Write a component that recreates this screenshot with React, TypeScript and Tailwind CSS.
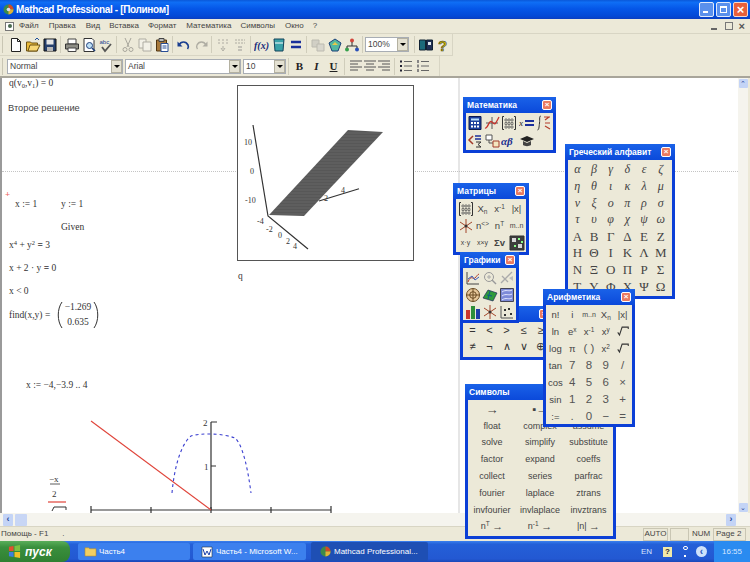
import React from "react";

const Ico = ({ children, size = 16 }: { children: React.ReactNode; size?: number }) => (
  <svg width={size} height={size} viewBox="0 0 16 16" className="block shrink-0">{children}</svg>
);

const Slot = ({ children, dim }: { children: React.ReactNode; dim?: boolean }) => (
  <div className={`w-[17px] h-[18px] flex items-center justify-center shrink-0 ${dim ? "opacity-40" : ""}`}>{children}</div>
);
const Sep = () => (
  <div className="w-[5px] h-[17px] flex justify-center shrink-0"><div className="w-px h-full bg-[#d0cdbb]" /></div>
);
const Handle = () => <div className="w-[3px] h-[17px] mr-[2px] border-l border-[#c9c6b4] shrink-0" />;

const Combo = ({ text, cls }: { text: string; cls: string }) => (
  <div className={`h-[15px] bg-white border border-[#a8adb4] flex items-center justify-between shrink-0 ${cls}`}>
    <span className="pl-[2px] text-[8.5px] leading-none text-[#444]">{text}</span>
    <span className="w-[11px] h-[13px] bg-[#e4e1d2] border border-[#b4b1a1] flex items-center justify-center">
      <span className="w-0 h-0 border-l-[3px] border-r-[3px] border-t-[3px] border-l-transparent border-r-transparent border-t-black" />
    </span>
  </div>
);

const I = {
  newDoc: <Ico><path d="M3.5 1.5h6l3 3v10h-9z" fill="#fff" stroke="#222" /><path d="M9.5 1.5v3h3" fill="none" stroke="#222" /></Ico>,
  open: <Ico><path d="M1.5 5h4l1 1h6v8h-11z" fill="#e8b93a" stroke="#6d5312" /><path d="M3 14l2-6h10l-3 6z" fill="#f7d774" stroke="#6d5312" /><path d="M10 3l2-2 2 2" fill="none" stroke="#1b4d9b" /></Ico>,
  save: <Ico><path d="M2 2h12v12H2z" fill="#25406e" stroke="#111" /><path d="M4.5 2.5h7v5h-7z" fill="#e6e6e6" /><path d="M5 10h6v4H5z" fill="#b8b8b8" /></Ico>,
  print: <Ico><path d="M4 2h8v5H4z" fill="#fff" stroke="#444" /><path d="M1.5 7h13v5h-13z" fill="#8d8d85" stroke="#333" /><path d="M4 11h8v3.5H4z" fill="#fff" stroke="#444" /></Ico>,
  preview: <Ico><path d="M3 1.5h8l2 2v11H3z" fill="#fff" stroke="#333" /><circle cx="8.5" cy="8.5" r="3" fill="#bfe0f5" stroke="#1f3f7a" /><path d="M11 11l3 3" stroke="#1f3f7a" strokeWidth="1.6" /></Ico>,
  spell: <Ico><text x="1.5" y="6.5" fontSize="6" fontFamily="Liberation Sans" fill="#1b3f8f">abc</text><path d="M4 10l3 4 6-7" fill="none" stroke="#555" strokeWidth="1.8" /></Ico>,
  cut: <Ico><path d="M5 1l4 9M11 1L7 10" stroke="#444" /><circle cx="5" cy="12.5" r="2" fill="none" stroke="#444" /><circle cx="11" cy="12.5" r="2" fill="none" stroke="#444" /></Ico>,
  copy: <Ico><path d="M2 2h7v9H2z" fill="#fff" stroke="#555" /><path d="M6 5h8v9H6z" fill="#fff" stroke="#555" /></Ico>,
  paste: <Ico><path d="M2.5 3h10v11h-10z" fill="#a8793a" stroke="#4e3410" /><path d="M5 1.5h5v3H5z" fill="#bbb" stroke="#444" /><path d="M7 6.5h7v8H7z" fill="#fff" stroke="#274d96" /><path d="M8.5 9h4M8.5 11h4" stroke="#274d96" /></Ico>,
  undo: <Ico><path d="M3 8c2-4 7-4 9 0 .7 1.5.4 3-.5 4" fill="none" stroke="#1a3f90" strokeWidth="1.7" /><path d="M1.5 4.5v5h5z" fill="#1a3f90" /></Ico>,
  redo: <Ico><path d="M13 8c-2-4-7-4-9 0-.7 1.5-.4 3 .5 4" fill="none" stroke="#555" strokeWidth="1.4" /><path d="M14.5 4.5v5h-5z" fill="#555" /></Ico>,
  insM: <Ico><path d="M3 3h2M3 6h2M7 3h2M7 6h2M11 3h2M11 6h2" stroke="#555" strokeWidth="1.2" /><path d="M8 9v3M6 11l2 3 2-3" stroke="#555" fill="none" /></Ico>,
  stack: <Ico><path d="M3 3h10M3 6h10" stroke="#555" strokeDasharray="2 1" /><path d="M6 9h4v2H6zM6 12h4v2H6z" fill="#888" /></Ico>,
  fx: <Ico><text x="0" y="12" fontSize="10" fontWeight="700" fontStyle="italic" fontFamily="Liberation Serif" fill="#17297a">f(x)</text></Ico>,
  unit: <Ico><path d="M3 2h10l-1 12H4z" fill="#3aa1a8" stroke="#13425a" /><path d="M4 6h8" stroke="#fff" /></Ico>,
  equal: <Ico><path d="M3 5h10M3 10h10" stroke="#1a2f9b" strokeWidth="2.4" /></Ico>,
  comp: <Ico><path d="M2 3h7v7H2z" fill="#aaa" stroke="#777" /><path d="M7 7h7v7H7z" fill="#bbb" stroke="#777" /></Ico>,
  resource: <Ico><path d="M2 6l6-4 6 4-3 8H5z" fill="#52b8a0" stroke="#1a3f7a" /><path d="M5 8h6l-3-3z" fill="#e6c84a" /></Ico>,
  tree: <Ico><circle cx="8" cy="3.5" r="2" fill="#d2453a" /><circle cx="3" cy="12.5" r="2" fill="#35a04a" /><circle cx="13" cy="12.5" r="2" fill="#2a4fb8" /><path d="M8 5v4M3 11V9h10v2" fill="none" stroke="#333" /></Ico>,
  book: <Ico><path d="M1.5 3h6v10h-6z" fill="#1b6a7a" stroke="#123" /><path d="M8.5 3h6v10h-6z" fill="#1f2f55" stroke="#123" /><path d="M10 5h3v3h-3z" fill="#dfe9ec" /></Ico>,
  help: <Ico><text x="3" y="14" fontSize="15" fontWeight="700" fontFamily="Liberation Sans" fill="#c9b400" stroke="#333" strokeWidth="0.5">?</text></Ico>,
  alignL: <Ico><path d="M2 3h12M2 6h8M2 9h12M2 12h8" stroke="#555" /></Ico>,
  alignC: <Ico><path d="M2 3h12M4 6h8M2 9h12M4 12h8" stroke="#555" /></Ico>,
  alignR: <Ico><path d="M2 3h12M6 6h8M2 9h12M6 12h8" stroke="#555" /></Ico>,
  bullets: <Ico><path d="M2 2.5h2v2H2zM2 7h2v2H2zM2 11.5h2v2H2z" fill="#223" /><path d="M6 3.5h8M6 8h8M6 12.5h8" stroke="#666" /></Ico>,
  numbers: <Ico><path d="M3 2v3M3 6.500v3M3 11v3" stroke="#223" /><path d="M6 3.5h8M6 8h8M6 12.5h8" stroke="#666" /></Ico>,
  calc: <Ico><path d="M2 1.500h12v13H2z" fill="#1c3f9c" stroke="#0c1a50" /><path d="M4 3.500h8v2H4z" fill="#b7e0ff" /><path d="M4 7h2v2H4zM7 7h2v2H7zM10 7h2v2h-2zM4 10.500h2v2H4zM7 10.500h2v2H7zM10 10.500h2v2h-2z" fill="#fff" /></Ico>,
  graph: <Ico><path d="M2 8h12M8 2v12" stroke="#555" /><path d="M1 13c3 1 4-9 7-6s3 3 7-5" fill="none" stroke="#c8352d" strokeWidth="1.3" /></Ico>,
  matrix: <Ico><path d="M3 1.500H1.500v13H3M13 1.500h1.500v13H13" fill="none" stroke="#333" /><path d="M4 4h2v2H4zM7 4h2v2H7zM10 4h2v2h-2zM4 7.500h2v2H4zM7 7.500h2v2H7zM10 7.500h2v2h-2zM4 11h2v2H4zM7 11h2v2H7zM10 11h2v2h-2z" fill="none" stroke="#555" strokeWidth=".7" /></Ico>,
  xeq: <Ico><text x="0" y="11" fontSize="9" fontStyle="italic" fontFamily="Liberation Serif" fill="#222">x</text><path d="M6 6h9M6 10h9" stroke="#1a2f9b" strokeWidth="1.8" /></Ico>,
  integral: <Ico><path d="M5 1c-2 0-1 3-1.500 7S3 15 1.500 15" fill="none" stroke="#333" /><path d="M8 2h6M9 5l4-3M9 8h5M9 11l5 3" fill="none" stroke="#b33d2a" strokeWidth="1.200" /></Ico>,
  cmp: <Ico><path d="M6 3L2 7l4 4" fill="none" stroke="#a33a2a" strokeWidth="1.500" /><path d="M8 3h6M8 6h6" stroke="#1a2f9b" strokeWidth="1.400" /><path d="M9 9h5l-3 2.500 3 2.500H9" fill="none" stroke="#333" /></Ico>,
  prog: <Ico><path d="M2 2h6v5H2z" fill="#fff" stroke="#555" /><path d="M5 7v3h4" stroke="#555" fill="none" /><path d="M9 8h6v6H9z" fill="#f4e6c0" stroke="#a33a2a" /></Ico>,
  ab: <Ico><text x="0" y="12" fontSize="11" fontWeight="700" fontStyle="italic" fontFamily="Liberation Serif" fill="#1b2f8f">αβ</text></Ico>,
  cap: <Ico><path d="M1 6l7-3 7 3-7 3z" fill="#222" /><path d="M4 8v4c2 1.500 6 1.500 8 0V8l-4 2z" fill="#444" /></Ico>,
  plot2: <Ico><path d="M2 2v12h12" fill="none" stroke="#444" /><path d="M3 12c3-8 5-2 7-4s2-3 4-4" fill="none" stroke="#b33d2a" /><path d="M3 9l4-3 3 4 4-3" fill="none" stroke="#3b5bb8" /></Ico>,
  zoomG: <Ico><circle cx="7" cy="7" r="4.500" fill="none" stroke="#999" /><path d="M10 10l4 4" stroke="#999" strokeWidth="1.500" /><path d="M5 7h4M7 5v4" stroke="#aaa" /></Ico>,
  trace: <Ico><path d="M2 13L13 2M3 6l6 6" stroke="#aaa" strokeWidth="1.300" /><path d="M10 8l4-2v5z" fill="#bbb" /></Ico>,
  polar: <Ico><circle cx="8" cy="8" r="6.500" fill="#e6c79a" stroke="#6a4a22" /><path d="M8 1.500v13M1.500 8h13" stroke="#6a4a22" /><circle cx="8" cy="8" r="3.300" fill="none" stroke="#6a4a22" /></Ico>,
  surf: <Ico><path d="M1 11l5-8 9 3-4 8z" fill="#2f9a3c" stroke="#115" strokeWidth=".6" /><path d="M5 8l5 1M8 4l-2 8" stroke="#0c5a88" /></Ico>,
  contour: <Ico><path d="M1.500 1.500h13v13h-13z" fill="#7d8ad8" stroke="#445" /><path d="M3 5c4-3 7 0 10-2M3 9c4-3 7 0 10-2M3 13c4-3 7 0 10-2" fill="none" stroke="#e6e9ff" /></Ico>,
  bar3: <Ico><path d="M1 6h4v9H1z" fill="#c8352d" /><path d="M6 2h4v13H6z" fill="#2f8f3a" /><path d="M11 5h4v10h-4z" fill="#1f3fa8" /></Ico>,
  vec: <Ico><path d="M8 1v14M2 4l12 8M14 4L2 12" stroke="#a3452a" strokeWidth="1" /><circle cx="8" cy="8" r="1.500" fill="#333" /></Ico>,
  scatter: <Ico><path d="M2 2v12h12" fill="none" stroke="#555" /><path d="M5 10h2v2H5zM9 4h2v2H9zM11 9h2v2h-2zM5 5h2v2H5z" fill="#333" /></Ico>,
  pic: <Ico><path d="M1 1h14v14H1z" fill="#3d3d3d" stroke="#333" /><path d="M3 3h4v4H3zM9 9h4v4H9z" fill="#d8d8d8" /><path d="M9 3h2v2H9zM5 10h2v2H5zM12 6h2v2h-2z" fill="#8f8" /></Ico>,
};

const CloseBtn = () => (
  <div className="w-[10px] h-[10px] rounded-[2px] bg-[#ea7a60] border border-white flex items-center justify-center text-white text-[8px] leading-none font-bold shrink-0">×</div>
);

const Palette = ({ title, cls, children }: { title: string; cls: string; children: React.ReactNode }) => (
  <div className={`absolute border-[3px] border-[#0b3fd6] border-t-0 bg-[#ece9d8] ${cls}`}>
    <div className="h-[16px] -mx-[3px] px-[4px] flex items-center justify-between bg-[linear-gradient(180deg,#1a62e8,#0b49da)]">
      <span className="text-[8.5px] font-bold text-white leading-none whitespace-nowrap">{title}</span>
      <CloseBtn />
    </div>
    {children}
  </div>
);

const GreekLower = "αβγδεζηθικλμνξοπρστυφχψω".split("");
const GreekUpper = "ΑΒΓΔΕΖΗΘΙΚΛΜΝΞΟΠΡΣΤΥΦΧΨΩ".split("");

const symbols = [
  ["float", "complex", "assume"], ["solve", "simplify", "substitute"], ["factor", "expand", "coeffs"],
  ["collect", "series", "parfrac"], ["fourier", "laplace", "ztrans"], ["invfourier", "invlaplace", "invztrans"],
];

const Cell = ({ children }: { children: React.ReactNode }) => (
  <div className="h-[17px] flex items-center justify-center text-[9.5px] leading-none text-[#444]">{children}</div>
);
const Big = ({ children }: { children: React.ReactNode }) => (
  <div className="h-[17px] flex items-center justify-center text-[11.500px] leading-none text-[#555]">{children}</div>
);

const Sup = ({ children }: { children: React.ReactNode }) => <sup className="text-[6.5px] -top-[3px] relative leading-none">{children}</sup>;
const Sub = ({ children }: { children: React.ReactNode }) => <sub className="text-[6.5px] top-[2px] relative leading-none">{children}</sub>;

const SqrtN = () => (
  <svg width="14" height="13" viewBox="0 0 16 14"><path d="M2 8l2 3 3-9h7v2" fill="none" stroke="#333" strokeWidth="1.200" /></svg>
);

const SymCell = ({ children }: { children: React.ReactNode }) => (
  <div className="h-[16.800px] flex items-center justify-center text-[9px] leading-none text-[#444] whitespace-nowrap">{children}</div>
);

export default function App() {
  return (
    <div className="relative w-[750px] h-[562px] overflow-hidden bg-[#ece9d8] flex flex-col font-['Liberation_Sans',sans-serif]">
      {/* Title bar */}
      <div className="h-[19px] shrink-0 flex items-center justify-between pl-[3px] pr-[2px] bg-[linear-gradient(180deg,#0a58d8_0%,#0f6ef5_12%,#0557e8_45%,#0349d6_85%,#0b3ec0_100%)]">
        <div className="flex items-center gap-[2px]">
          <svg width="11" height="11" viewBox="0 0 12 12"><circle cx="6" cy="6" r="5.500" fill="#3d8a4a" /><path d="M6 .5A5.500 5.500 0 0 1 11.500 6H6z" fill="#d04a2a" /><path d="M6 6h5.500A5.500 5.500 0 0 1 6 11.500z" fill="#e0b33a" /><circle cx="6" cy="6" r="2" fill="#dde" /></svg>
          <span className="text-[10px] font-bold text-white leading-none tracking-[-0.35px]">Mathcad Professional - [Полином]</span>
        </div>
        <div className="flex gap-[2px]">
          <div className="w-[15px] h-[15px] rounded-[2px] border border-[#dfe8fb] bg-[#5a90ec] flex items-end pl-[3px] pb-[3px]"><div className="w-[5px] h-[2px] bg-white" /></div>
          <div className="w-[15px] h-[15px] rounded-[2px] border border-[#dfe8fb] bg-[#5a90ec] flex items-center justify-center"><div className="w-[7px] h-[7px] border border-white border-t-2" /></div>
          <div className="w-[15px] h-[15px] rounded-[2px] border border-[#f3d8cf] bg-[#e8603a] flex items-center justify-center text-white text-[13px] font-bold leading-none">×</div>
        </div>
      </div>

      {/* Menu */}
      <div className="h-[15px] shrink-0 flex items-center pl-[5px] pr-[3px] justify-between border-b border-[#d8d5c4]">
        <div className="flex items-center text-[8px] leading-none text-[#444]">
          <div className="w-[9px] h-[9px] border border-[#777] bg-white flex items-center justify-center mr-[5px]"><div className="w-[4px] h-[4px] rounded-full bg-[#4a6a50]" /></div>
          <span className="mr-[10px]">Файл</span>
          <span className="mr-[10px]">Правка</span>
          <span className="mr-[9px]">Вид</span>
          <span className="mr-[9px]">Вставка</span>
          <span className="mr-[10px]">Формат</span>
          <span className="mr-[9px]">Математика</span>
          <span className="mr-[10px]">Символы</span>
          <span className="mr-[9px]">Окно</span>
          <span>?</span>
        </div>
        <div className="flex items-center gap-[6px] text-[#555] pr-[2px]">
          <span className="w-[8px] h-[8px] flex items-end"><span className="w-[6px] h-[2px] bg-[#666]" /></span>
          <span className="w-[8px] h-[8px] border border-[#777]" />
          <span className="text-[11px] leading-[8px] font-bold">×</span>
        </div>
      </div>

      {/* Toolbar 1 */}
      <div className="h-[22px] shrink-0 flex items-center pl-[2px] w-[453px] border-r border-b border-[#d8d5c4]">
        <Handle />
        <Slot>{I.newDoc}</Slot><Slot>{I.open}</Slot><Slot>{I.save}</Slot><Sep />
        <Slot>{I.print}</Slot><Slot>{I.preview}</Slot><Slot>{I.spell}</Slot><Sep />
        <Slot dim>{I.cut}</Slot><Slot dim>{I.copy}</Slot><Slot>{I.paste}</Slot><Sep />
        <Slot>{I.undo}</Slot><Slot dim>{I.redo}</Slot><Sep />
        <Slot dim>{I.insM}</Slot><Slot dim>{I.stack}</Slot><Sep />
        <Slot>{I.fx}</Slot><Slot>{I.unit}</Slot><Slot>{I.equal}</Slot><Sep />
        <Slot dim>{I.comp}</Slot><Slot>{I.resource}</Slot><Slot>{I.tree}</Slot><Sep />
        <Combo text="100%" cls="w-[44px]" />
        <div className="w-[3px] shrink-0" />
        <Sep />
        <Slot>{I.book}</Slot><Slot>{I.help}</Slot>
      </div>

      {/* Toolbar 2 */}
      <div className="h-[20px] shrink-0 flex items-center pl-[2px] w-[440px] border-r border-[#d8d5c4]">
        <Handle />
        <Combo text="Normal" cls="w-[116px] mr-[2px]" />
        <Combo text="Arial" cls="w-[116px] mr-[2px]" />
        <Combo text="10" cls="w-[43px]" />
        <Sep />
        <Slot><span className="text-[11px] font-bold font-['Liberation_Serif',serif] text-[#222]">B</span></Slot>
        <Slot><span className="text-[11px] font-bold italic font-['Liberation_Serif',serif] text-[#222]">I</span></Slot>
        <Slot><span className="text-[11px] font-bold underline font-['Liberation_Serif',serif] text-[#222]">U</span></Slot>
        <Sep />
        <Slot>{I.alignL}</Slot><div className="-ml-[3px]"><Slot>{I.alignC}</Slot></div><div className="-ml-[3px]"><Slot>{I.alignR}</Slot></div>
        <Sep />
        <Slot>{I.bullets}</Slot><Slot>{I.numbers}</Slot>
      </div>

      {/* Document + vertical scrollbar */}
      <div className="h-[437px] shrink-0 flex border-t-2 border-[#a8a59a]">
        <div className="relative w-[738px] h-full bg-white border-l-2 border-[#9a9a9a] overflow-hidden font-['Liberation_Serif',serif] text-[9.5px] text-[#333] leading-none">
          {/* page guides */}
          <div className="absolute left-[456px] top-0 bottom-0 w-[2px] bg-[#e6e6e6]" />
          <div className="absolute left-0 right-0 top-[93px] border-t border-dotted border-[#c4c4c4]" />

          {/* worksheet regions */}
          <div className="absolute left-[7px] top-[1px] whitespace-nowrap">q(v<Sub>0</Sub>,v<Sub>1</Sub>) = 0</div>
          <div className="absolute left-[6px] top-[26px] whitespace-nowrap font-['Liberation_Sans',sans-serif] text-[9.300px] text-[#444]">Второе решение</div>
          <div className="absolute left-[3px] top-[112px] text-[#e66] text-[9px] font-bold">+</div>
          <div className="absolute left-[13px] top-[122px] whitespace-nowrap">x := 1</div>
          <div className="absolute left-[59px] top-[122px] whitespace-nowrap">y := 1</div>
          <div className="absolute left-[59px] top-[145px] whitespace-nowrap">Given</div>
          <div className="absolute left-[7px] top-[163px] whitespace-nowrap">x<Sup>4</Sup> + y<Sup>2</Sup> <b>=</b> 3</div>
          <div className="absolute left-[7px] top-[186px] whitespace-nowrap">x + 2 · y <b>=</b> 0</div>
          <div className="absolute left-[7px] top-[209px] whitespace-nowrap">x &lt; 0</div>
          <div className="absolute left-[7px] top-[233px] whitespace-nowrap">find(x,y) =</div>
          <div className="absolute left-[55px] top-[224px] w-[42px] h-[26px] flex flex-col items-center justify-between py-[1px]">
            <svg width="42" height="26" viewBox="0 0 42 26" className="absolute left-0 top-0 block"><path d="M5 0C0 7 0 19 5 26M37 0C42 7 42 19 37 26" fill="none" stroke="#333" /></svg>
            <span>−1.269</span><span>0.635</span>
          </div>
          <div className="absolute left-[24px] top-[303px] whitespace-nowrap">x := −4,−3.9 .. 4</div>
          <div className="absolute left-[236px] top-[194px]">q</div>

          {/* 3D plot */}
          <div className="absolute left-[235px] top-[7px] w-[177px] h-[176px] bg-white border border-[#555]">
            <svg width="175" height="174" viewBox="0 0 175 174" className="block">
              <defs>
                <pattern id="mesh" width="3" height="3" patternUnits="userSpaceOnUse"><rect width="3" height="3" fill="#5e5e5e" /><path d="M0 0h3" stroke="#444" strokeWidth=".6" /></pattern>
              </defs>
              <path d="M15 39L30 130L70 163" fill="none" stroke="#333" strokeWidth="1.200" />
              <path d="M81 115L121 102.700" fill="none" stroke="#333" strokeWidth="1.200" />
              <path d="M31 129L110 44L145 46L66 130z" fill="url(#mesh)" />
              <g fill="#333" fontSize="8" fontFamily="Liberation Serif">
                <text x="6" y="59">10</text><text x="12" y="88">0</text><text x="7" y="117">-10</text>
                <text x="19" y="138">-4</text><text x="28" y="146">-2</text><text x="40" y="152">0</text>
                <text x="48" y="158">2</text><text x="55" y="163">4</text><text x="86" y="115">2</text><text x="103" y="107">4</text>
              </g>
            </svg>
          </div>

          {/* 2D plot */}
          <svg width="736" height="435" viewBox="2 78 736 435" className="absolute left-0 top-0 block pointer-events-none">
            <path d="M91 510H331M91 506v8M151 507v6M211 507v6M271 507v6M331 506v8" fill="none" stroke="#333" strokeWidth="1.200" />
            <path d="M211 422V510M211 422h6M211 466h5" fill="none" stroke="#333" strokeWidth="1.200" />
            <path d="M91 421L211 510" fill="none" stroke="#e0443a" strokeWidth="1.100" />
            <path d="M172 493C174 470 180 445 191 436C200 433 222 433 235 438C243 445 248 470 251 493" fill="none" stroke="#3a3fd0" strokeWidth="1.100" strokeDasharray="3 3" />
            <path d="M48 502H66" stroke="#e0443a" strokeWidth="1.200" />
            <path d="M50 484H60" stroke="#333" strokeWidth=".8" />
            <path d="M52 511l2-4h12v3" fill="none" stroke="#333" />
            <g fill="#333" fontSize="9" fontFamily="Liberation Serif">
              <text x="203" y="426">2</text><text x="204" y="470">1</text>
              <text x="49" y="482">−x</text><text x="52" y="497">2</text>
            </g>
          </svg>
        </div>
        <div className="w-[10px] h-full flex flex-col justify-between items-center bg-[#f5f4ee]">
          <div className="w-[9px] h-[9px] mt-[1px] rounded-[1px] bg-[#c4d4f6] flex items-center justify-center text-[#2a4a9a] text-[7px] leading-none">⌃</div>
          <div className="w-[9px] h-[9px] mb-[1px] rounded-[1px] bg-[#c4d4f6] flex items-center justify-center text-[#2a4a9a] text-[7px] leading-none">⌄</div>
        </div>
      </div>

      {/* Horizontal scrollbar */}
      <div className="h-[14px] shrink-0 flex items-center pl-[3px] pr-[14px] bg-[#f5f4ee] border-b border-[#d8d5c4]">
        <div className="w-[10px] h-[12px] rounded-[1px] bg-[#c4d4f6] flex items-center justify-center text-[#2a4a9a] text-[9px] font-bold leading-none">‹</div>
        <div className="w-[12px] h-[12px] ml-[2px] rounded-[1px] bg-[#c8d6f5]" />
        <div className="ml-auto w-[10px] h-[12px] rounded-[1px] bg-[#c4d4f6] flex items-center justify-center text-[#2a4a9a] text-[9px] font-bold leading-none">›</div>
      </div>

      {/* Status bar */}
      <div className="h-[14px] shrink-0 flex items-center pl-[1px] text-[8px] leading-none text-[#444]">
        <span>Помощь - F1</span>
        <span className="ml-[14px]">.</span>
        <div className="ml-auto flex items-center h-full">
          <div className="w-[25px] h-[13px] border border-[#c9c6b4] flex items-center justify-center">AUTO</div>
          <div className="w-[19px] h-[13px] ml-[2px] border border-[#c9c6b4]" />
          <div className="w-[22px] h-[13px] ml-[1px] flex items-center justify-center">NUM</div>
          <div className="w-[33px] h-[13px] ml-[1px] mr-[4px] border border-[#c9c6b4] flex items-center pl-[2px] whitespace-nowrap">Page 2</div>
        </div>
      </div>

      {/* Taskbar */}
      <div className="h-[21px] shrink-0 flex items-stretch bg-[linear-gradient(180deg,#3a80ee_0%,#2460d8_15%,#2358d2_85%,#1a48b8_100%)] text-white text-[8px] leading-none">
        <div className="w-[70px] flex items-center pl-[8px] gap-[4px] rounded-r-[8px] bg-[linear-gradient(180deg,#5aae5a,#3a8f3d_30%,#2f8032)]">
          <svg width="13" height="13" viewBox="0 0 14 14"><path d="M1 2l5-1v5.500H1z" fill="#e2502e" /><path d="M7 1l6-1v6.500H7z" fill="#7cc240" /><path d="M1 7.500h5V13l-5-1z" fill="#3d7fe0" /><path d="M7 7.500h6V14l-6-1z" fill="#f0c028" /></svg>
          <span className="text-[12px] font-bold italic">пуск</span>
        </div>
        <div className="w-[112px] ml-[8px] my-[2px] rounded-[2px] bg-[#3c80ee] flex items-center pl-[6px] gap-[2px]">
          <svg width="13" height="11" viewBox="0 0 14 12"><path d="M1 2h4l1 1h7v8H1z" fill="#f2cf62" stroke="#b38a22" strokeWidth=".6" /></svg>
          <span>Часть4</span>
        </div>
        <div className="w-[113px] ml-[3px] my-[2px] rounded-[2px] bg-[#3c80ee] flex items-center pl-[8px] gap-[3px]">
          <svg width="12" height="12" viewBox="0 0 12 12"><path d="M1 1h10v10H1z" fill="#fff" stroke="#234" strokeWidth=".6" /><path d="M2 3l2 6 2-4 2 4 2-6" fill="none" stroke="#1b3fa8" /></svg>
          <span className="whitespace-nowrap">Часть4 - Microsoft W...</span>
        </div>
        <div className="w-[117px] ml-[5px] my-[1px] rounded-[2px] bg-[#1e4fb4] flex items-center pl-[9px] gap-[3px]">
          <svg width="11" height="11" viewBox="0 0 12 12"><circle cx="6" cy="6" r="5.500" fill="#3d8a4a" /><path d="M6 .5A5.500 5.500 0 0 1 11.500 6H6z" fill="#d04a2a" /><path d="M6 6h5.500A5.500 5.500 0 0 1 6 11.500z" fill="#e0b33a" /></svg>
          <span className="whitespace-nowrap">Mathcad Professional...</span>
        </div>
        <div className="ml-auto flex items-center text-[#d8e6ff]">
          <span className="mr-[11px]">EN</span>
          <span className="w-[9px] h-[10px] bg-[#f2e9a8] text-[#223] text-[8px] font-bold flex items-center justify-center mr-[10px]">?</span>
          <span className="w-[6px] h-[11px] flex flex-col justify-between items-center mr-[8px]"><span className="w-[5px] h-[4px] border border-white rounded-full" /><span className="w-[2px] h-[2px] bg-white" /></span>
          <span className="w-[11px] h-[11px] rounded-full bg-[#cfe2fb] text-[#2a55b8] text-[10px] font-bold flex items-center justify-center mr-[7px]">‹</span>
          <div className="w-[36px] h-full bg-[#2a8bf0] flex items-center justify-center">16:55</div>
        </div>
      </div>

      {/* Floating palettes */}
      <Palette title="Математика" cls="left-[463px] top-[97px] w-[93px] h-[56px] z-10">
        <div className="grid grid-cols-5 w-[87px]">
          <div className="h-[19px] flex items-center justify-center">{I.calc}</div>
          <div className="h-[19px] flex items-center justify-center">{I.graph}</div>
          <div className="h-[19px] flex items-center justify-center">{I.matrix}</div>
          <div className="h-[19px] flex items-center justify-center">{I.xeq}</div>
          <div className="h-[19px] flex items-center justify-center">{I.integral}</div>
          <div className="h-[18px] flex items-center justify-center">{I.cmp}</div>
          <div className="h-[18px] flex items-center justify-center">{I.prog}</div>
          <div className="h-[18px] flex items-center justify-center">{I.ab}</div>
          <div className="h-[18px] flex items-center justify-center">{I.cap}</div>
        </div>
      </Palette>

      <Palette title="Греческий алфавит" cls="left-[565px] top-[144px] w-[110px] h-[155px] z-10">
        <div className="grid grid-cols-6 w-[100px] ml-[1px] mt-[1px] font-['Liberation_Serif',serif] text-[#444]">
          {GreekLower.map((g) => (
            <div key={g} className="h-[16.700px] flex items-center justify-center text-[12px] italic leading-none">{g}</div>
          ))}
          {GreekUpper.map((g) => (
            <div key={g} className="h-[16.700px] flex items-center justify-center text-[13px] leading-none">{g}</div>
          ))}
        </div>
      </Palette>

      <Palette title="Матрицы" cls="left-[453px] top-[183px] w-[76px] h-[72px] z-10">
        <div className="grid grid-cols-4 w-[68px] ml-[1px] mt-[1px]">
          <Cell>{I.matrix}</Cell>
          <Cell><span>X<Sub>n</Sub></span></Cell>
          <Cell><span>x<Sup>-1</Sup></span></Cell>
          <Cell>|x|</Cell>
          <Cell>{I.vec}</Cell>
          <Cell><span>n<Sup>&lt;&gt;</Sup></span></Cell>
          <Cell><span>n<Sup>T</Sup></span></Cell>
          <Cell><span className="text-[7px]">m..n</span></Cell>
          <Cell><span className="text-[7px]">x·y</span></Cell>
          <Cell><span className="text-[7px]">x×y</span></Cell>
          <Cell><span className="font-bold">Σv</span></Cell>
          <Cell>{I.pic}</Cell>
        </div>
      </Palette>

      <Palette title="" cls="left-[460px] top-[306px] w-[93px] h-[54px] z-10">
        <div className="grid grid-cols-5 w-[85px] ml-[1px]">
          {["=", "<", ">", "≤", "≥", "≠", "¬", "∧", "∨", "⊕"].map((s) => (
            <div key={s} className="h-[16.500px] flex items-center justify-center text-[11px] leading-none text-[#333]">{s}</div>
          ))}
        </div>
      </Palette>

      <Palette title="Графики" cls="left-[460px] top-[252px] w-[59px] h-[71px] z-20">
        <div className="grid grid-cols-3 w-[51px] ml-[1px] mt-[1px]">
          <Cell>{I.plot2}</Cell><Cell>{I.zoomG}</Cell><Cell>{I.trace}</Cell>
          <Cell>{I.polar}</Cell><Cell>{I.surf}</Cell><Cell>{I.contour}</Cell>
          <Cell>{I.bar3}</Cell><Cell>{I.vec}</Cell><Cell>{I.scatter}</Cell>
        </div>
      </Palette>

      <Palette title="Символы" cls="left-[465px] top-[384px] w-[151px] h-[155px] z-20">
        <div className="grid grid-cols-[48px_48px_49px] mt-[1px]">
          <SymCell><span className="text-[13px]">→</span></SymCell>
          <SymCell><span className="text-[11px]">▪→</span></SymCell>
          <SymCell>modifiers</SymCell>
          {symbols.flat().map((s) => (
            <SymCell key={s}>{s}</SymCell>
          ))}
          <SymCell>n<Sup>T</Sup>&nbsp;<span className="text-[11px]">→</span></SymCell>
          <SymCell>n<Sup>-1</Sup>&nbsp;<span className="text-[11px]">→</span></SymCell>
          <SymCell>|n|&nbsp;<span className="text-[11px]">→</span></SymCell>
        </div>
      </Palette>

      <Palette title="Арифметика" cls="left-[543px] top-[289px] w-[92px] h-[138px] z-30">
        <div className="grid grid-cols-5 w-[84px] ml-[1px] mt-[1px]">
          <Cell>n!</Cell><Cell>i</Cell><Cell><span className="text-[7px]">m..n</span></Cell><Cell><span>X<Sub>n</Sub></span></Cell><Cell>|x|</Cell>
          <Cell>ln</Cell><Cell><span>e<Sup>x</Sup></span></Cell><Cell><span>x<Sup>-1</Sup></span></Cell><Cell><span>x<Sup>y</Sup></span></Cell><Cell><SqrtN /></Cell>
          <Cell>log</Cell><Cell>π</Cell><Big>( )</Big><Cell><span>x<Sup>2</Sup></span></Cell><Cell><SqrtN /></Cell>
          <Cell>tan</Cell><Big>7</Big><Big>8</Big><Big>9</Big><Big>/</Big>
          <Cell>cos</Cell><Big>4</Big><Big>5</Big><Big>6</Big><Big>×</Big>
          <Cell>sin</Cell><Big>1</Big><Big>2</Big><Big>3</Big><Big>+</Big>
          <Cell>:=</Cell><Big>.</Big><Big>0</Big><Big>−</Big><Big>=</Big>
        </div>
      </Palette>
    </div>
  );
}
